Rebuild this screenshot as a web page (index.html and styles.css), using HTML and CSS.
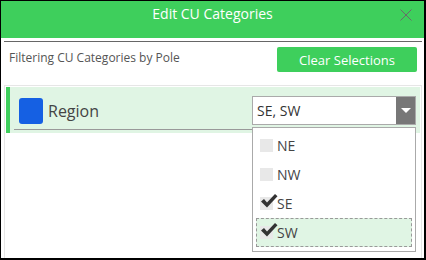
FILE: index.html
```html
<!DOCTYPE html>
<html lang="en">
<head>
    <meta charset="UTF-8">
    <title>Edit CU Categories</title>
    <link rel="stylesheet" href="styles.css">
</head>
<body>
    <div class="dialog">
        <div class="header">
            <span class="title">Edit CU Categories</span>
            <svg class="close" width="12" height="12" viewBox="0 0 12 12">
                <path d="M0.5 0.5 L11.5 11.5 M11.5 0.5 L0.5 11.5" stroke="#6a6a6a" stroke-width="1" fill="none"/>
            </svg>
        </div>
        <div class="content">
            <div class="toolbar">
                <span class="hint">Filtering CU Categories by Pole</span>
                <button class="clear">Clear Selections</button>
            </div>
            <div class="panel">
                <div class="row">
                    <div class="row-inner">
                        <span class="swatch"></span>
                        <span class="row-label">Region</span>
                        <div class="select">
                            <span class="select-value">SE, SW</span>
                            <span class="select-arrow"></span>
                        </div>
                    </div>
                </div>
                <ul class="options">
                    <li class="option"><span class="box"></span>NE</li>
                    <li class="option"><span class="box"></span>NW</li>
                    <li class="option"><span class="box"><svg class="check" width="18" height="16" viewBox="0 0 18 16"><path d="M1 8.5 L4 6 L7 9.5 L15 1 L17.5 3.2 L7 14.5 Z" fill="#333"/></svg></span>SE</li>
                    <li class="option focused"><span class="box"><svg class="check" width="18" height="16" viewBox="0 0 18 16"><path d="M1 8.5 L4 6 L7 9.5 L15 1 L17.5 3.2 L7 14.5 Z" fill="#333"/></svg></span>SW</li>
                </ul>
            </div>
        </div>
    </div>
</body>
</html>
```

FILE: styles.css
```css
body {
    margin: 0;
    font-family: "Open Sans", Arial, sans-serif;
    background-color: #fff;
}
.dialog {
    width: 426px;
    height: 260px;
    box-sizing: border-box;
    border: 1px solid #000;
    border-right-width: 2px;
    border-bottom-width: 2px;
    display: flex;
    flex-direction: column;
    overflow: hidden;
}
.header {
    height: 37px;
    background-color: #3ecf5c;
    position: relative;
    display: flex;
    justify-content: center;
    padding-top: 3px;
    box-sizing: border-box;
}
.title {
    color: #fff;
    font-size: 14px;
    line-height: 20px;
}
.close {
    position: absolute;
    right: 12px;
    top: 8px;
}
.content {
    flex: 1;
    margin: 3px 2px 0 3px;
    border-top: 1px solid #666;
    display: flex;
    flex-direction: column;
}
.toolbar {
    display: flex;
    justify-content: space-between;
    align-items: flex-start;
    padding: 5px 5px 0 5px;
    height: 43px;
    box-sizing: border-box;
}
.hint {
    font-size: 12px;
    color: #555;
    margin-top: 2px;
}
.clear {
    width: 140px;
    height: 25px;
    background-color: #3ecf5c;
    color: #fff;
    border: none;
    border-radius: 2px;
    font-family: inherit;
    font-size: 13px;
    padding: 0;
}
.panel {
    flex: 1;
    position: relative;
    border: 1px solid #e6e6e6;
    border-bottom: none;
    padding: 1px 1px 0 1px;
}
.row {
    background-color: #e0f5e4;
    border-left: 4px solid #3ecf5c;
    padding: 0 4px 3px 4px;
}
.row-inner {
    display: flex;
    align-items: center;
    height: 43px;
    box-sizing: border-box;
    border-bottom: 1px solid #999;
    padding-left: 5px;
    padding-top: 6px;
}
.swatch {
    width: 24px;
    height: 26px;
    border-radius: 3px;
    background-color: #1560e3;
}
.row-label {
    font-size: 16px;
    color: #444;
    margin-left: 5px;
    flex: 1;
}
.select {
    width: 164px;
    height: 29px;
    box-sizing: border-box;
    border: 1px solid #aaa;
    background-color: #fff;
    display: flex;
    margin-top: -2px;
    position: relative;
    z-index: 1;
}
.select-value {
    flex: 1;
    font-size: 14px;
    color: #333;
    line-height: 27px;
    padding-left: 4px;
}
.select-arrow {
    width: 19px;
    background-color: #777;
    position: relative;
}
.select-arrow::after {
    content: "";
    position: absolute;
    left: 5px;
    top: 11px;
    border-left: 5px solid transparent;
    border-right: 5px solid transparent;
    border-top: 5px solid #fff;
}
.options {
    position: absolute;
    left: 247px;
    top: 41px;
    width: 164px;
    height: 125px;
    box-sizing: border-box;
    margin: 0;
    padding: 3px 3px 0 3px;
    list-style: none;
    border: 1px solid #aaa;
    background-color: #fff;
}
.option {
    display: flex;
    align-items: center;
    height: 29px;
    box-sizing: border-box;
    font-size: 14px;
    color: #444;
    padding-left: 3px;
    border: 1px dashed transparent;
}
.option.focused {
    background-color: #e0f5e4;
    border-color: #999;
}
.box {
    width: 13px;
    height: 13px;
    background-color: #e8e8e8;
    margin-right: 4px;
    position: relative;
}
.check {
    position: absolute;
    left: 0;
    top: -4px;
}
```
